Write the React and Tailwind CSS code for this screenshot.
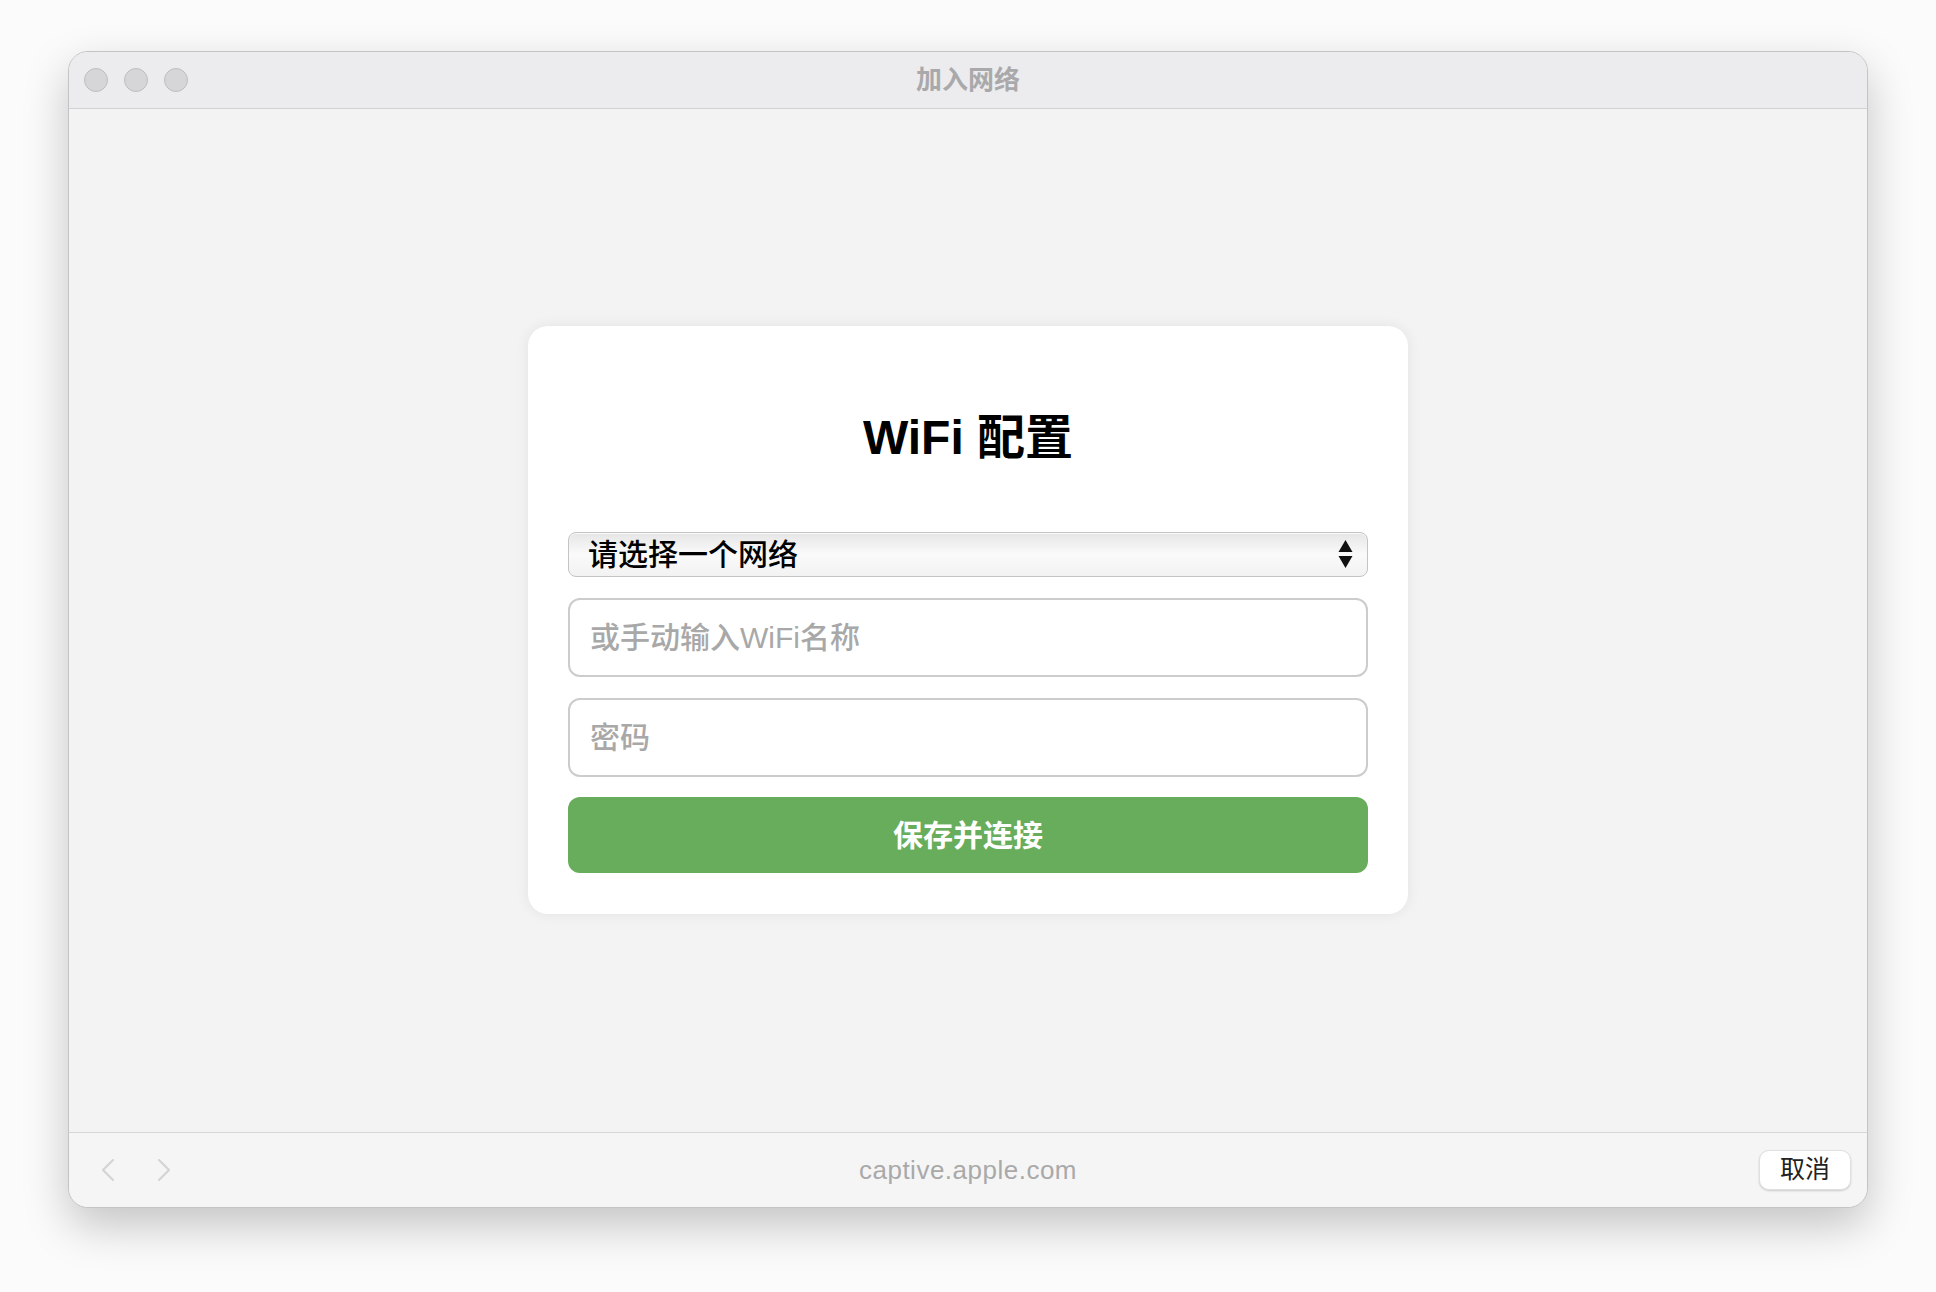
const FONT = { fontFamily: '"Liberation Sans", "Noto Sans CJK SC", sans-serif' }

function TrafficLight() {
  return <span className="block w-[24px] h-[24px] rounded-full bg-[#d6d6d8] border border-[#bdbdc0]" />
}

function SelectArrows() {
  return (
    <svg width="15" height="29" viewBox="0 0 15 29" className="shrink-0">
      <path d="M7.5 0 L14.5 12 L0.5 12 Z" fill="#111" />
      <path d="M0.5 16 L14.5 16 L7.5 28 Z" fill="#111" />
    </svg>
  )
}

function Chevron({ dir }) {
  const d = dir === 'left' ? 'M12 1 L2 11 L12 21' : 'M2 1 L12 11 L2 21'
  return (
    <svg width="14" height="22" viewBox="0 0 14 22">
      <path d={d} fill="none" stroke="#d3d3d3" strokeWidth="2" strokeLinecap="round" strokeLinejoin="round" />
    </svg>
  )
}

export default function App() {
  return (
    <div className="w-[1936px] h-[1292px] bg-[#fbfbfb] pt-[51px]" style={FONT}>
      <div className="mx-auto w-[1800px] h-[1157px] rounded-[20px] border border-[#c4c4c6] overflow-hidden flex flex-col shadow-[0_18px_45px_rgba(0,0,0,0.22)] bg-[#f3f3f3]">
        {/* title bar */}
        <div className="relative h-[57px] shrink-0 bg-[#ececee] border-b border-[#d2d2d4] flex items-center pl-[15px] gap-[16px]">
          <TrafficLight />
          <TrafficLight />
          <TrafficLight />
          <div className="absolute inset-0 flex items-center justify-center text-[26px] font-bold text-[#a9a9ab] pointer-events-none">
            加入网络
          </div>
        </div>

        {/* content */}
        <div className="flex-1 flex justify-center pt-[217px]">
          <div className="w-[880px] h-[588px] bg-white rounded-[20px] shadow-[0_0_14px_rgba(0,0,0,0.07)] px-[40px] pb-[40px] flex flex-col">
            <h1 className="mt-[83px] mb-[65px] h-[58px] leading-[58px] text-center text-[48px] font-bold text-black">
              WiFi 配置
            </h1>
            <div className="h-[45px] rounded-[8px] border border-[#c4c4c4] bg-gradient-to-b from-[#e6e6e6] via-[#fafafa] to-[#f2f2f2] flex items-center pl-[19px] pr-[14px] shadow-[inset_0_1px_0_rgba(255,255,255,0.8)]">
              <span className="flex-1 text-[30px] leading-none font-medium text-black">请选择一个网络</span>
              <SelectArrows />
            </div>
            <div className="mt-[21px] h-[79px] rounded-[12px] border-2 border-[#cccccc] bg-white flex items-center pl-[20px] text-[30px] font-medium text-[#a8a8a8]">
              或手动输入WiFi名称
            </div>
            <div className="mt-[21px] h-[79px] rounded-[12px] border-2 border-[#cccccc] bg-white flex items-center pl-[20px] text-[30px] font-medium text-[#a8a8a8]">
              密码
            </div>
            <button className="mt-[20px] h-[76px] rounded-[12px] bg-[#67ad5b] text-white text-[30px] font-semibold flex items-center justify-center">
              保存并连接
            </button>
          </div>
        </div>

        {/* bottom bar */}
        <div className="relative h-[75px] shrink-0 bg-[#f5f5f5] border-t border-[#d6d6d6] flex items-center px-[16px]">
          <div className="flex items-center gap-[42px] pl-[16px]">
            <Chevron dir="left" />
            <Chevron dir="right" />
          </div>
          <div className="absolute inset-0 flex items-center justify-center text-[26px] tracking-[0.5px] text-[#a9a9a9] pointer-events-none">
            captive.apple.com
          </div>
          <button className="ml-auto w-[92px] h-[40px] rounded-[10px] bg-white border border-[#e0e0e0] shadow-[0_1px_2px_rgba(0,0,0,0.18)] text-[25px] text-[#222] flex items-center justify-center">
            取消
          </button>
        </div>
      </div>
    </div>
  )
}
